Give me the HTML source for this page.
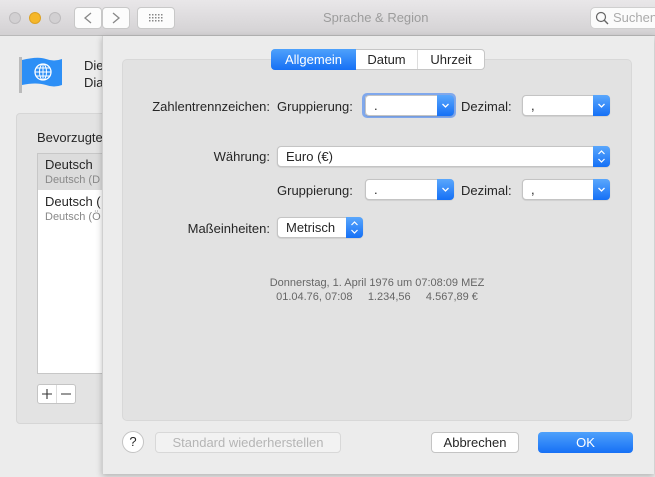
<!DOCTYPE html>
<html><head><meta charset="utf-8"><style>
*{box-sizing:border-box;margin:0;padding:0}
body{width:655px;height:477px;overflow:hidden;background:#ececec;font-family:"Liberation Sans",sans-serif;font-size:13px;color:#262626;position:relative}
.abs{position:absolute}
.tb{left:0;top:0;width:655px;height:36px;background:linear-gradient(#e9e7e9,#d3d1d3);border-bottom:1px solid #b9b9b9}
.dot{width:12px;height:12px;border-radius:50%;top:12px}
.btn{background:#fcfcfc;border:1px solid #c8c8c8;border-radius:4px;height:22px;top:7px}
.sel{background:#fff;border:1px solid #c4c4c4;border-radius:4px;height:21px;box-shadow:0 0.5px 1px rgba(0,0,0,.15)}
.sel span{position:absolute;left:8px;top:2px}
.arr{position:absolute;right:-1px;top:-1px;width:17px;height:21px;background:linear-gradient(#5aa7fc,#1570f6);border-radius:0 4px 4px 0}
.arr svg{position:absolute;left:0;top:0}
.lbl{text-align:right}
</style></head><body>
<div class="abs tb"></div>
<div class="abs dot" style="left:9px;background:#d2d0d2;border:1px solid #bdbbbd"></div>
<div class="abs dot" style="left:29px;background:#f5b72a;border:1px solid #dca123"></div>
<div class="abs dot" style="left:49px;background:#d2d0d2;border:1px solid #bdbbbd"></div>
<div class="abs btn" style="left:74px;width:28px"></div>
<div class="abs btn" style="left:102px;width:28px"></div>
<svg class="abs" style="left:74px;top:7px" width="56" height="22"><path d="M17 6 L11 11 L17 16" fill="none" stroke="#888" stroke-width="1.3"/><path d="M39 6 L45 11 L39 16" fill="none" stroke="#888" stroke-width="1.3"/></svg>
<div class="abs btn" style="left:137px;width:38px"></div>
<svg class="abs" style="left:137px;top:7px" width="38" height="22"><g fill="#888"><rect x="12" y="7" width="1.5" height="1.5"/><rect x="15" y="7" width="1.5" height="1.5"/><rect x="18" y="7" width="1.5" height="1.5"/><rect x="21" y="7" width="1.5" height="1.5"/><rect x="24" y="7" width="1.5" height="1.5"/><rect x="12" y="10" width="1.5" height="1.5"/><rect x="15" y="10" width="1.5" height="1.5"/><rect x="18" y="10" width="1.5" height="1.5"/><rect x="21" y="10" width="1.5" height="1.5"/><rect x="24" y="10" width="1.5" height="1.5"/><rect x="12" y="13" width="1.5" height="1.5"/><rect x="15" y="13" width="1.5" height="1.5"/><rect x="18" y="13" width="1.5" height="1.5"/><rect x="21" y="13" width="1.5" height="1.5"/><rect x="24" y="13" width="1.5" height="1.5"/></g></svg>
<div class="abs" style="left:323px;top:10px;color:#9c9c9c;font-size:13px">Sprache &amp; Region</div>
<div class="abs" style="left:590px;top:7px;width:70px;height:22px;background:#fbfbfb;border:1px solid #cfcfcf;border-radius:5px"></div>
<svg class="abs" style="left:595px;top:11px" width="14" height="14"><circle cx="6" cy="6" r="4.5" fill="none" stroke="#666" stroke-width="1.2"/><line x1="9.3" y1="9.3" x2="13" y2="13" stroke="#666" stroke-width="1.4"/></svg>
<div class="abs" style="left:613px;top:10px;color:#aaa">Suchen</div>

<svg class="abs" style="left:18px;top:55px" width="46" height="40"><rect x="1" y="2" width="3" height="36" fill="#bbb"/><path d="M4 5 Q20 1 28 4 Q36 7 44 4 L44 30 Q36 33 28 30 Q18 27 4 30 Z" fill="#2d8ff6"/><circle cx="25" cy="17" r="8" fill="none" stroke="#fff" stroke-width="1.3"/><ellipse cx="25" cy="17" rx="3.5" ry="8" fill="none" stroke="#fff" stroke-width="1"/><line x1="17" y1="17" x2="33" y2="17" stroke="#fff"/><line x1="18" y1="13" x2="32" y2="13" stroke="#fff"/><line x1="18" y1="21" x2="32" y2="21" stroke="#fff"/><line x1="25" y1="9" x2="25" y2="25" stroke="#fff"/></svg>
<div class="abs" style="left:84px;top:58px">Die</div>
<div class="abs" style="left:84px;top:75px">Dia</div>
<div class="abs" style="left:16px;top:113px;width:100px;height:311px;background:#e3e3e3;border:1px solid #d6d6d6;border-radius:4px"></div>
<div class="abs" style="left:37px;top:130px">Bevorzugte</div>
<div class="abs" style="left:37px;top:153px;width:80px;height:221px;background:#fff;border:1px solid #c7c7c7"></div>
<div class="abs" style="left:38px;top:154px;width:79px;height:36px;background:#dcdcdc"></div>
<div class="abs" style="left:45px;top:157px">Deutsch</div>
<div class="abs" style="left:45px;top:174px;font-size:11px;color:#888">Deutsch (D</div>
<div class="abs" style="left:45px;top:194px">Deutsch (</div>
<div class="abs" style="left:45px;top:211px;font-size:11px;color:#888">Deutsch (Ö</div>
<div class="abs" style="left:37px;top:384px;width:39px;height:20px;background:#fff;border:1px solid #c4c4c4;border-radius:3px"></div>
<div class="abs" style="left:56px;top:385px;width:1px;height:18px;background:#ddd"></div>
<svg class="abs" style="left:37px;top:384px" width="39" height="20"><path d="M5 10 H15 M10 5 V15 M24 10 H34" stroke="#333" stroke-width="1.1"/></svg>

<div class="abs" style="left:102px;top:36px;width:552px;height:438px;background:#ececec;border-left:1px solid #d0d0d0;box-shadow:0 2px 6px rgba(0,0,0,.25)"></div>
<div class="abs" style="left:122px;top:59px;width:510px;height:362px;background:#e2e2e2;border:1px solid #d8d8d8;border-radius:5px"></div>
<div class="abs" style="left:271px;top:49px;width:214px;height:21px;background:#fff;border:1px solid #c6c6c6;border-radius:4px"></div>
<div class="abs" style="left:271px;top:49px;width:85px;height:21px;background:linear-gradient(#4ea1fb,#1670f5);border-radius:4px 0 0 4px;color:#fff;text-align:center;line-height:21px">Allgemein</div>
<div class="abs" style="left:417px;top:50px;width:1px;height:19px;background:#ddd"></div>
<div class="abs" style="left:356px;top:52px;width:61px;text-align:center">Datum</div>
<div class="abs" style="left:418px;top:52px;width:66px;text-align:center">Uhrzeit</div>

<div class="abs lbl" style="left:130px;top:99px;width:140px">Zahlentrennzeichen:</div>
<div class="abs" style="left:277px;top:99px">Gruppierung:</div>
<div class="abs" style="left:362px;top:93px;width:94px;height:25px;border:3px solid #80a8ec;border-radius:5px"></div>
<div class="abs sel" style="left:365px;top:95px;width:89px"><span>.</span><div class="arr"><svg width="17" height="21"><path d="M5.5 9 L8.5 12 L11.5 9" fill="none" stroke="#fff" stroke-width="1.3"/></svg></div></div>
<div class="abs" style="left:461px;top:99px">Dezimal:</div>
<div class="abs sel" style="left:522px;top:95px;width:88px"><span>,</span><div class="arr"><svg width="17" height="21"><path d="M5.5 9 L8.5 12 L11.5 9" fill="none" stroke="#fff" stroke-width="1.3"/></svg></div></div>

<div class="abs lbl" style="left:130px;top:149px;width:140px">Währung:</div>
<div class="abs sel" style="left:277px;top:146px;width:333px"><span>Euro (€)</span><div class="arr"><svg width="17" height="21"><path d="M5.5 8 L8.5 5 L11.5 8 M5.5 13 L8.5 16 L11.5 13" fill="none" stroke="#fff" stroke-width="1.2"/></svg></div></div>
<div class="abs" style="left:277px;top:183px">Gruppierung:</div>
<div class="abs sel" style="left:365px;top:179px;width:89px"><span>.</span><div class="arr"><svg width="17" height="21"><path d="M5.5 9 L8.5 12 L11.5 9" fill="none" stroke="#fff" stroke-width="1.3"/></svg></div></div>
<div class="abs" style="left:461px;top:183px">Dezimal:</div>
<div class="abs sel" style="left:522px;top:179px;width:88px"><span>,</span><div class="arr"><svg width="17" height="21"><path d="M5.5 9 L8.5 12 L11.5 9" fill="none" stroke="#fff" stroke-width="1.3"/></svg></div></div>

<div class="abs lbl" style="left:130px;top:221px;width:140px">Maßeinheiten:</div>
<div class="abs sel" style="left:277px;top:217px;width:86px"><span>Metrisch</span><div class="arr"><svg width="17" height="21"><path d="M5.5 8 L8.5 5 L11.5 8 M5.5 13 L8.5 16 L11.5 13" fill="none" stroke="#fff" stroke-width="1.2"/></svg></div></div>

<div class="abs" style="left:122px;top:277px;width:510px;text-align:center;font-size:11px;color:#666">Donnerstag, 1. April 1976 um 07:08:09 MEZ</div>
<div class="abs" style="left:122px;top:291px;width:510px;text-align:center;font-size:11px;color:#666">01.04.76, 07:08&nbsp;&nbsp;&nbsp;&nbsp;&nbsp;1.234,56&nbsp;&nbsp;&nbsp;&nbsp;&nbsp;4.567,89 €</div>

<div class="abs" style="left:122px;top:431px;width:22px;height:22px;border-radius:50%;background:#fff;border:1px solid #c4c4c4;text-align:center;line-height:20px">?</div>
<div class="abs" style="left:155px;top:432px;width:186px;height:21px;background:#f2f2f2;border:1px solid #d8d8d8;border-radius:4px;color:#b5b5b5;text-align:center;line-height:19px">Standard wiederherstellen</div>
<div class="abs" style="left:431px;top:432px;width:88px;height:21px;background:#fff;border:1px solid #c4c4c4;border-radius:4px;text-align:center;line-height:19px">Abbrechen</div>
<div class="abs" style="left:538px;top:432px;width:95px;height:21px;background:linear-gradient(#4ea1fb,#1670f5);border-radius:4px;color:#fff;text-align:center;line-height:21px">OK</div>
</body></html>
